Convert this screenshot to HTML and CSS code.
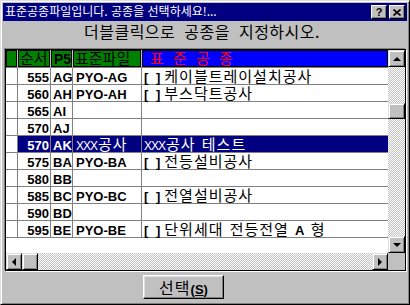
FILE: index.html
```html
<!DOCTYPE html>
<html lang="ko">
<head>
<meta charset="utf-8">
<title>표준공종파일</title>
<link rel="stylesheet" href="styles.css">
</head>
<body>
<div class="window">
  <div class="titlebar">
    <span class="title">표준공종파일입니다. 공종을 선택하세요!...</span>
    <span class="tbtn help">?</span>
    <span class="tbtn close"><svg width="8" height="7" viewBox="0 0 8 7"><path d="M0.5 0.5L7.5 6.5M7.5 0.5L0.5 6.5" stroke="#000" stroke-width="1.6" fill="none"/></svg></span>
  </div>
  <div class="body">
    <div class="subtitle">더블클릭으로 공종을 지정하시오.</div>
    <div class="grid">
      <div class="data">
        <div class="row head">
          <div class="hc"></div>
          <div class="hc">순서</div>
          <div class="hc p5">P5</div>
          <div class="hc">표준파일</div>
          <div class="hc blue">표 준 공 종</div>
        </div>
        <div class="row"><div class="c"></div><div class="c num">555</div><div class="c code">AG</div><div class="c file">PYO-AG</div><div class="c name"><span class="br">[ ]</span><span class="ko">케이블트레이설치공사</span></div></div>
        <div class="row"><div class="c"></div><div class="c num">560</div><div class="c code">AH</div><div class="c file">PYO-AH</div><div class="c name"><span class="br">[ ]</span><span class="ko">부스닥트공사</span></div></div>
        <div class="row"><div class="c"></div><div class="c num">565</div><div class="c code">AI</div><div class="c file"></div><div class="c name"></div></div>
        <div class="row"><div class="c"></div><div class="c num">570</div><div class="c code">AJ</div><div class="c file"></div><div class="c name"></div></div>
        <div class="row sel"><div class="c"></div><div class="c num">570</div><div class="c code">AK</div><div class="c file"><span class="x">XXX</span><span class="ko">공사</span></div><div class="c name"><span class="x">XXX</span><span class="ko">공사 테스트</span></div></div>
        <div class="row"><div class="c"></div><div class="c num">575</div><div class="c code">BA</div><div class="c file">PYO-BA</div><div class="c name"><span class="br">[ ]</span><span class="ko">전등설비공사</span></div></div>
        <div class="row"><div class="c"></div><div class="c num">580</div><div class="c code">BB</div><div class="c file"></div><div class="c name"></div></div>
        <div class="row"><div class="c"></div><div class="c num">585</div><div class="c code">BC</div><div class="c file">PYO-BC</div><div class="c name"><span class="br">[ ]</span><span class="ko">전열설비공사</span></div></div>
        <div class="row"><div class="c"></div><div class="c num">590</div><div class="c code">BD</div><div class="c file"></div><div class="c name"></div></div>
        <div class="row"><div class="c"></div><div class="c num">595</div><div class="c code">BE</div><div class="c file">PYO-BE</div><div class="c name"><span class="br">[ ]</span><span class="ko">단위세대 전등전열 </span>A<span class="ko"> 형</span></div></div>
        <div class="empty"></div>
        <div class="hscroll">
          <div class="sbtn"><span class="arr left"></span></div>
          <div class="sbtn thumb-h"></div>
          <div class="track"></div>
          <div class="sbtn"><span class="arr right"></span></div>
        </div>
      </div>
      <div class="vscroll">
        <div class="sbtn"><span class="arr up"></span></div>
        <div class="track vtrack"><div class="sbtn thumb-v"></div></div>
        <div class="sbtn"><span class="arr down"></span></div>
        <div class="corner"></div>
      </div>
    </div>
    <div class="footer">
      <button class="btn">선택<b class="acc">(<u>S</u>)</b></button>
    </div>
  </div>
</div>
</body>
</html>
```
FILE: styles.css
```css
html, body {
  margin: 0;
  padding: 0;
  background: #c0c0c0;
}
.window {
  width: 410px;
  height: 305px;
  box-sizing: border-box;
  border: 1px solid;
  border-color: #dfdfdf #000 #000 #dfdfdf;
  box-shadow: inset 1px 1px #fff, inset -1px -1px #808080;
  padding: 2px;
  display: flex;
  flex-direction: column;
  background: #c0c0c0;
  font-family: "Noto Sans CJK KR", sans-serif;
}
.titlebar {
  height: 18px;
  flex: none;
  background: #000080;
  display: flex;
  align-items: center;
  padding: 0 2px 0 2px;
}
.title {
  flex: 1;
  align-self: flex-start;
  color: #fff;
  font-size: 12px;
  line-height: 15px;
  white-space: nowrap;
}
.tbtn {
  width: 16px;
  height: 14px;
  box-sizing: border-box;
  margin-left: 2px;
  background: #c0c0c0;
  border: 1px solid;
  border-color: #fff #000 #000 #fff;
  box-shadow: inset -1px -1px #808080;
  display: flex;
  align-items: center;
  justify-content: center;
}
.help {
  font: bold 11px/12px "Liberation Sans", sans-serif;
  color: #000;
}
.body {
  flex: 1;
  display: flex;
  flex-direction: column;
}
.subtitle {
  height: 28px;
  box-sizing: border-box;
  font-size: 16px;
  line-height: 20px;
  letter-spacing: 0.5px;
  word-spacing: 4px;
  text-align: center;
  color: #000;
  padding-right: 6px;
}
.grid {
  margin-left: 2px;
  width: 401px;
  height: 222px;
  box-sizing: border-box;
  border: 1px solid #000;
  box-shadow: -1px -1px #808080, 1px 1px #fff;
  display: flex;
  flex: none;
}
.data {
  width: 382px;
  display: flex;
  flex-direction: column;
  background: #fff;
}
.row {
  display: grid;
  grid-template-columns: 12px 33px 22px 69px 1fr;
  height: 17px;
}
.row.head {
  height: 18px;
}
.hc {
  background: #008000;
  box-sizing: border-box;
  height: 18px;
  border-right: 1px solid #c0c0c0;
  border-bottom: 1px solid #808080;
  box-shadow: inset 0 0 0 1px #000;
  font-size: 15px;
  line-height: 16px;
  padding-left: 2px;
  color: #000;
  white-space: nowrap;
}
.hc.p5 {
  font: bold 14px/16px "Liberation Sans", sans-serif;
  padding-top: 1px;
  padding-left: 3px;
}
.hc.blue {
  background: #0000ff;
  color: #ff0000;
  padding-left: 8px;
  word-spacing: 5px;
  border-right: none;
}
.c {
  box-sizing: border-box;
  height: 17px;
  border-right: 1px solid #808080;
  border-bottom: 1px solid #808080;
  font: bold 13px/14px "Liberation Sans", "Noto Sans CJK KR", sans-serif;
  padding-top: 3px;
  color: #000;
  white-space: nowrap;
}
.c.num {
  text-align: right;
  padding-right: 1px;
}
.c.code {
  padding-left: 2px;
}
.c.file {
  padding-left: 3px;
}
.c.name {
  padding-left: 2px;
  border-right: none;
}
.br {
  letter-spacing: 2px;
  margin-right: 2px;
}
.ko {
  font: 15px "Noto Sans CJK KR", sans-serif;
  line-height: 0;
  letter-spacing: 1px;
  word-spacing: 1px;
}
.x {
  font: 12px "Liberation Sans", sans-serif;
  letter-spacing: -1px;
  margin-right: 1px;
}
.row.sel .c:not(:first-child) {
  background: #000080;
  color: #fff;
}
.empty {
  flex: 1;
}
.hscroll {
  height: 17px;
  display: flex;
  flex: none;
}
.sbtn {
  box-sizing: border-box;
  width: 16px;
  height: 17px;
  flex: none;
  background: #c0c0c0;
  border: 1px solid;
  border-color: #dfdfdf #000 #000 #dfdfdf;
  box-shadow: inset 1px 1px #fff, inset -1px -1px #808080;
  display: flex;
  align-items: center;
  justify-content: center;
}
.track {
  flex: 1;
  background: repeating-conic-gradient(#fff 0 25%, #c0c0c0 0 50%) 0 0 / 2px 2px;
}
.vscroll {
  width: 17px;
  display: flex;
  flex-direction: column;
}
.vscroll .sbtn {
  width: 17px;
}
.vtrack {
  display: flex;
  flex-direction: column;
}
.thumb-v {
  margin-top: 36px;
  height: 16px;
}
.corner {
  height: 17px;
  flex: none;
  background: #c0c0c0;
}
.arr {
  width: 0;
  height: 0;
  border-style: solid;
  border-color: transparent;
}
.arr.up {
  border-width: 0 4px 4px 4px;
  border-bottom-color: #000;
}
.arr.down {
  border-width: 4px 4px 0 4px;
  border-top-color: #000;
}
.arr.left {
  border-width: 4px 4px 4px 0;
  border-right-color: #000;
}
.arr.right {
  border-width: 4px 0 4px 4px;
  border-left-color: #000;
}
.footer {
  display: flex;
  padding-left: 140px;
  margin-top: 4px;
}
.btn {
  width: 81px;
  height: 24px;
  box-sizing: border-box;
  margin: 0;
  padding: 0;
  background: #c0c0c0;
  border: 1px solid;
  border-color: #fff #000 #000 #fff;
  box-shadow: inset -1px -1px #808080, inset 1px 1px #dfdfdf;
  font: 16px/20px "Noto Sans CJK KR", sans-serif;
  letter-spacing: 1px;
  color: #000;
}
.acc {
  font: bold 13px "Liberation Sans", sans-serif;
  letter-spacing: 0;
}
```
